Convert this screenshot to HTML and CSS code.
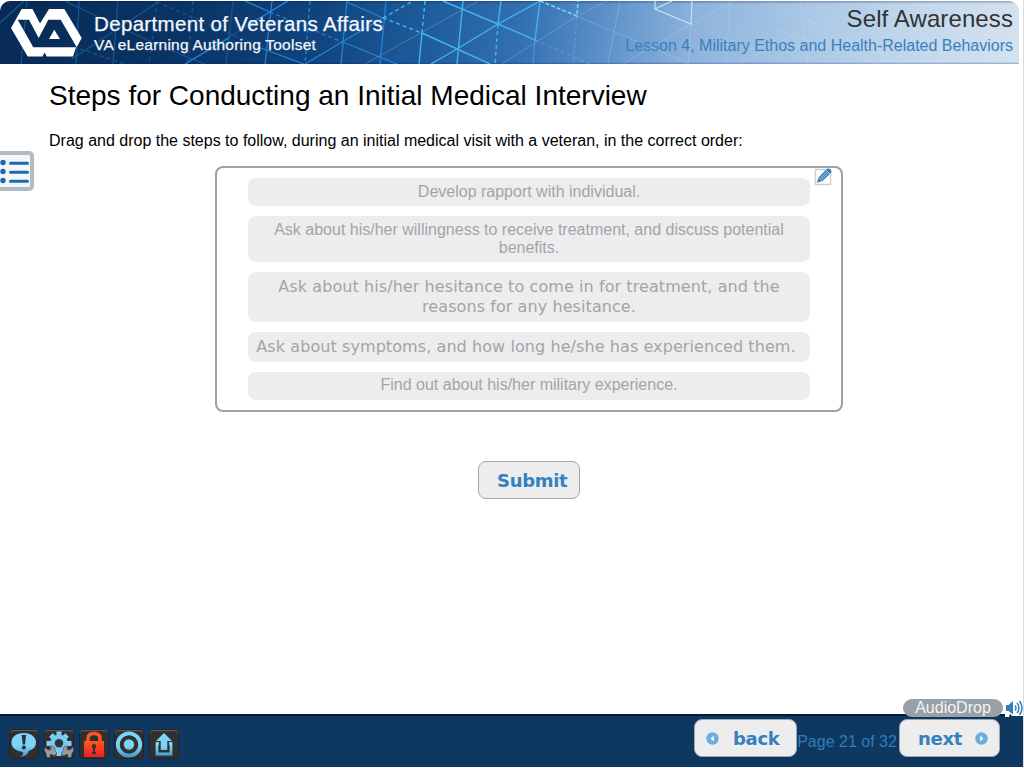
FILE: index.html
```html
<!DOCTYPE html>
<html lang="en">
<head>
<meta charset="utf-8">
<title>Self Awareness</title>
<link rel="stylesheet" href="styles.css">
</head>
<body>
<div class="page">
  <header class="header">
    <svg class="pattern" viewBox="0 1 1019 63" preserveAspectRatio="none" aria-hidden="true">
      <g fill="none" stroke="#145594" stroke-width="1.3">
        <path d="M0 23L24 1M27 1L21 64M79 1L76 64M65 1L160 46L205 64M72 59L158 2M118 1L113 64M185 64L270 12L286 1M233 1L226 64"/>
        <path stroke-dasharray="4 3" d="M157 1L149 64M157 2L210 25L250 42M193 1L188 64M80 49L125 64"/>
      </g>
      <g fill="none" stroke="#2283d2" stroke-width="1.3">
        <path d="M185 64L229 38M245 1L270 12M250 24L288 1M272 1L265 64M343 42L397 64M347 1L341 64M305 64L342 42L383 18M347 2L383 18M386 1L380 64M258 47L304 64"/>
        <path stroke-dasharray="4 3" d="M270 12L342 42M310 1L305 64"/>
      </g>
      <g fill="none" stroke="#40b5eb" stroke-width="1.4">
        <path d="M422 33L490 64M422 33L419 64M431 64L457 49L498 24L540 1M463 1L457 64M443 1L498 24L535 40L540 1M501 1L498 24"/>
        <path stroke-dasharray="4 3" d="M425 1L422 33M498 24L495 64M383 18L413 1M383 18L422 33"/>
      </g>
      <path fill="none" stroke="#70d8f4" stroke-width="1.5" stroke-dasharray="4 2" d="M540 1L577 16L578 1"/>
      <path fill="none" stroke="#bce6f2" stroke-width="1.2" d="M655 1V9L691 24L692 1M655 9L672 1"/>
      <g fill="none" stroke="#d4e5f4" stroke-opacity=".25">
        <path d="M365 64L478 1M502 64L577 16L607 1M577 16L690 64M620 1L608 64M535 40L533 64M623 64L691 24L735 1M691 24L688 64M730 1L726 64M770 1L870 50L905 64M740 64L840 10M800 1L808 64M770 28L880 64"/>
        <path stroke-dasharray="4 3" d="M535 40L590 64M577 16L573 64M691 24L790 64"/>
      </g>
      <g fill="#fff">
        <path d="M21.7 9H32.5L40 23.5L49 9H64.3L81.7 38L76.7 47.3L60.7 19.7H48.3L38.7 38L29 19.7H17.7L33.3 47.3H76L73 56.5H46.7L44.6 52.5L42.5 56.5H27.7L11 28Z"/>
        <path d="M54.3 29.7L60 39H49Z"/>
      </g>
    </svg>
    <div class="brand">
      <div class="dept">Department of Veterans Affairs</div>
      <div class="tool">VA eLearning Authoring Toolset</div>
    </div>
    <div class="course">
      <div class="name">Self Awareness</div>
      <div class="lesson">Lesson 4, Military Ethos and Health-Related Behaviors</div>
    </div>
  </header>

  <button class="menu" aria-label="Contents">
    <svg width="34" height="40" viewBox="0 0 34 40">
      <g fill="#1b67b0"><circle cx="3" cy="11.5" r="2.7"/><circle cx="3" cy="20.5" r="2.7"/><circle cx="3" cy="29.5" r="2.7"/></g>
      <path stroke="#1b67b0" stroke-width="3" stroke-linecap="round" d="M10.5 12.2H27.5M10.5 21.2H27.5M10.5 30.2H27.5"/>
    </svg>
  </button>

  <main class="main">
    <h1 class="title">Steps for Conducting an Initial Medical Interview</h1>
    <p class="intro">Drag and drop the steps to follow, during an initial medical visit with a veteran, in the correct order:</p>
    <section class="box">
      <svg class="edit" width="18" height="18" viewBox="0 0 18 18">
        <path d="M1.5 1.5H16.5V16.5H1.5Z" fill="#fff" stroke="#cfcfcf" stroke-width="1.5"/>
        <path d="M3 14.800L4.500 9.500L12.500 1.200Q14 -.3 16.200 1.200Q18.200 3 17 4.800L8.700 13Z" fill="#357fb9"/>
        <path d="M5 10L8.300 12.800M6.800 9.800L13 3.600M8 11.200L14.400 4.800M12 2.200L16 6" stroke="#d6eaf8" fill="none" stroke-width=".7"/>
      </svg>
      <div class="step s1"><span>Develop rapport with individual.</span></div>
      <div class="step s2"><span>Ask about his/her willingness to receive treatment, and discuss potential<br>benefits.</span></div>
      <div class="step wide s3"><span>Ask about his/her hesitance to come in for treatment, and the<br>reasons for any hesitance.</span></div>
      <div class="step wide s4"><span>Ask about symptoms, and how long he/she has experienced them.</span></div>
      <div class="step s5"><span>Find out about his/her military experience.</span></div>
    </section>
    <button class="btn submit">Submit</button>
  </main>

  <footer class="footer">
    <div class="tools">
      <svg class="tile" viewBox="0 0 30 30"><path d="M15 4C7 4 2.5 8 2.5 13.5C2.5 18.5 6.500 22 13 22.700C15 24 14.500 26 11.500 28C17 27 19 25 19.500 22C24.500 20.500 27 17.500 27 13.500C27 8 22 4 15 4Z" fill="url(#b)"/><path d="M12.700 6H17L16 15.500H13.700Z" fill="#25303a"/><circle cx="14.900" cy="18.600" r="2" fill="#25303a"/></svg>
      <svg class="tile" viewBox="0 0 30 30"><g stroke="#7ed3f7" stroke-width="5"><path d="M15 2.500V27M2.500 14.500H27.500M7 6L23 23M23 6L7 23"/></g><circle cx="15" cy="14.500" r="9" fill="#75ccf3"/><circle cx="15" cy="14.300" r="4.200" fill="#30343a"/><path id="wrench" d="M1 18L4 21H7V18L5 17H9L11 19V22L13 24L10.500 27L8.500 25.500H6V28.500H3L2 24L.5 22Z" fill="#969ca0" stroke="#555" stroke-width=".6"/><use href="#wrench" transform="translate(30 0) scale(-1 1)"/></svg>
      <svg class="tile" viewBox="0 0 30 30"><path d="M9 14V9.500Q9 4.500 15 4.500Q21 4.500 21 9.500V14" fill="none" stroke="#ff5420" stroke-width="3.600"/><path d="M5 12H25V28H5Z" fill="url(#r)"/><circle cx="15" cy="17.200" r="2.200" fill="#333"/><path d="M14 17H16V23H17V25H13V23H14Z" fill="#333"/></svg>
      <svg class="tile" viewBox="0 0 30 30"><circle cx="15" cy="15.500" r="11.200" fill="none" stroke="url(#b)" stroke-width="3.800"/><circle cx="15" cy="15.500" r="5.200" fill="url(#b)"/></svg>
      <svg class="tile" viewBox="0 0 30 30"><path d="M15 4L23 12H18.300V21H11.700V12H7Z" fill="url(#b)"/><path d="M10 14.500H8V25H22V14.500H20" fill="none" stroke="url(#b)" stroke-width="2.800"/></svg>
      <svg class="defs" width="0" height="0"><defs>
        <linearGradient id="b" gradientUnits="userSpaceOnUse" x1="0" y1="4" x2="0" y2="28"><stop offset=".55" stop-color="#7ed3f7"/><stop offset="1" stop-color="#4398d2"/></linearGradient>
        <linearGradient id="r" x1="0" y1="0" x2="0" y2="1"><stop offset="0" stop-color="#ff5a21"/><stop offset="1" stop-color="#ed1c24"/></linearGradient>
      </defs></svg>
    </div>
    <nav class="nav">
      <button class="btn back"><svg width="13" height="13" viewBox="0 0 13 13"><circle cx="6.500" cy="6.500" r="6.200" fill="#6cade0"/><path d="M7.800 3.800V9.200L4.500 6.500Z" fill="#fff"/></svg><span>back</span></button>
      <span class="count">Page 21 of 32</span>
      <button class="btn next"><span>next</span><svg width="13" height="13" viewBox="0 0 13 13"><circle cx="6.500" cy="6.500" r="6.200" fill="#6cade0"/><path d="M5.200 3.800V9.200L8.500 6.500Z" fill="#fff"/></svg></button>
    </nav>
    <div class="audio"><span class="drop">AudioDrop</span>
      <svg width="18" height="18" viewBox="0 0 18 18"><path fill="#fff" d="M0 0H18V17H7L5 15L4 18H0Z"/><path d="M1 6H3.500L8 2V15.500L3.500 12H1Z" fill="#307fbb"/><path d="M10 6.500Q12 9 10 11.500M12 4Q16 9 12 14M14.500 2Q19.500 9 14.500 16" stroke="#307fbb" stroke-width="1.500" fill="none"/></svg>
    </div>
  </footer>
</div>
</body>
</html>
```
FILE: styles.css
```css
body { margin: 0; background: #fff; font-family: "Liberation Sans", Arial, sans-serif; }
button { font: inherit; margin: 0; padding: 0; }
.page { position: relative; box-sizing: border-box; width: 1024px; height: 768px; overflow: hidden; display: flex; flex-direction: column; border-right: 1px solid #dcdcdc; padding-top: 1px; }
.header { position: relative; display: flex; justify-content: space-between; width: 1019px; height: 63px; flex: none; border-radius: 10px 10px 0 0; overflow: hidden; background: linear-gradient(180deg, rgba(0,20,70,.3) 0, transparent 3px, transparent 61px, rgba(0,20,120,.3) 63px), linear-gradient(97deg, #082b55 0%, #0a3465 18%, #10437d 31%, #1f5c9c 42%, #3270b1 51%, #5b90c8 59%, #8eb3dc 68%, #aac8e6 79%, #c4d8ec 90%, #d4e2f0 100%); }
.pattern { position: absolute; inset: 0; width: 1019px; height: 63px; }
.brand { position: relative; padding: 11px 0 0 94px; color: #f4f7fb; white-space: nowrap; -webkit-text-stroke: .25px #f4f7fb; }
.dept { font-size: 20.5px; line-height: 24px; letter-spacing: .34px; }
.tool { font-size: 15.5px; line-height: 18px; letter-spacing: .24px; }
.course { position: relative; padding: 4px 6px 0 0; text-align: right; white-space: nowrap; }
.name { color: #333; font-size: 24px; line-height: 28px; letter-spacing: .1px; }
.lesson { color: #3a80bc; font-size: 16px; line-height: 18px; margin-top: 4px; }
.menu { position: absolute; left: 0; top: 151px; box-sizing: border-box; width: 34px; height: 40px; border: 4px solid #afbcc4; border-left: 0; border-radius: 0 5px 5px 0; background: #f3f5f7; overflow: hidden; }
.menu svg { display: block; margin-top: -4px; }
.main { flex: 1; display: flex; flex-direction: column; padding-left: 49px; }
.title { margin: 15px 0 0; font-weight: 400; font-size: 28px; line-height: 34px; white-space: nowrap; color: #000; }
.intro { margin: 19px 0 0; font-size: 16px; line-height: 18px; white-space: nowrap; color: #000; }
.box { position: relative; box-sizing: border-box; width: 628px; height: 246px; margin: 16px 0 0 166px; border: 2px solid #98a3a9; border-radius: 8px; padding: 10px 31px; display: flex; flex-direction: column; gap: 10px; }
.edit { position: absolute; left: 597px; top: 0; }
.step { box-sizing: border-box; border-radius: 8px; background: #ededed; color: #a0a5ab; text-align: center; white-space: nowrap; font-size: 16px; line-height: 18px; padding-top: 5px; }
.wide { font-family: "DejaVu Sans", Verdana, sans-serif; line-height: 20px; letter-spacing: .08px; }
.s1, .s5 { height: 28px; }
.s5 { padding-top: 4px; }
.s2 { height: 46px; }
.s3 { height: 50px; }
.s4 { height: 30px; padding-right: 6px; }
.btn { box-sizing: border-box; display: flex; align-items: center; border: 1px solid #a0a8ae; border-radius: 8px; background: #ededed; color: #3581bf; font: bold 18px "DejaVu Sans", Verdana, sans-serif; letter-spacing: -.3px; }
.submit { width: 102px; height: 38px; margin: 49px 0 0 429px; padding-left: 18px; }
.footer { position: relative; box-sizing: border-box; height: 53px; flex: none; background: #0e3860; border-top: 2px solid #031a3b; margin-bottom: 1px; display: flex; justify-content: space-between; }
.tools { display: flex; gap: 5px; padding: 13px 0 0 9px; }
.tile { box-sizing: border-box; width: 30px; height: 30px; border-radius: 5px; background: #303030; box-shadow: inset 0 0 0 1px #202428, inset 0 2px 1px #606468; }
.defs { position: absolute; }
.nav { display: flex; padding: 3px 23px 0 0; }
.nav .btn { height: 38px; }
.back { width: 103px; padding-left: 11px; gap: 14px; }
.next { width: 101px; padding-left: 18px; gap: 13px; }
.count { width: 102px; text-align: center; color: #2e7dbb; font-size: 16px; line-height: 18px; padding: 14px 2px 0 0; white-space: nowrap; box-sizing: border-box; }
.audio { position: absolute; left: 903px; top: -17px; height: 18px; display: flex; gap: 2px; }
.drop { width: 100px; height: 18px; border-radius: 9px; background: #98a1a7; color: #f4f4f4; text-align: center; font-size: 16px; line-height: 18px; }
```
